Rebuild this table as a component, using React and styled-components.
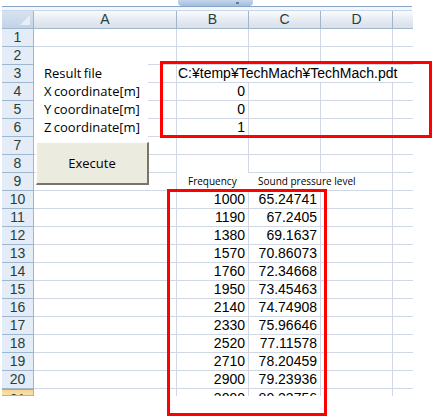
import React from "react";
import styled, { createGlobalStyle } from "styled-components";

const GlobalStyle = createGlobalStyle`
    body {
        margin: 0;
        background: #fff;
    }
`;

const columns = ["A", "B", "C", "D", ""];

const labels = ["Result file", "X coordinate[m]", "Y coordinate[m]", "Z coordinate[m]"];

const results = [
    ["1000", "65.24741"],
    ["1190", "67.2405"],
    ["1380", "69.1637"],
    ["1570", "70.86073"],
    ["1760", "72.34668"],
    ["1950", "73.45463"],
    ["2140", "74.74908"],
    ["2330", "75.96646"],
    ["2520", "77.11578"],
    ["2710", "78.20459"],
    ["2900", "79.23936"],
    ["3090", "80.23756"],
];

// what goes in each row (1..21), columns A..E
function rowCells(row) {
    const empty = [{}, {}, {}, {}, {}];
    if (row === 3) {
        return [{}, { text: "C:¥temp¥TechMach¥TechMach.pdt", overflow: true, noRight: true }, { noRight: true }, { noRight: true }, {}];
    }
    if (row >= 4 && row <= 6) {
        return [{}, { text: row === 6 ? "1" : "0", right: true }, {}, {}, {}];
    }
    if (row === 8) {
        return [{}, { noBottom: true }, {}, {}, {}];
    }
    if (row === 9) {
        return [{}, { text: "Frequency", small: true, pad: 11, noRight: true }, { text: "Sound pressure level", small: true, pad: 9, noRight: true }, {}, {}];
    }
    if (row >= 10) {
        const [f, spl] = results[row - 10];
        return [{}, { text: f, right: true }, { text: spl, right: true }, {}, {}];
    }
    return empty;
}

function App() {
    const rows = Array.from({ length: 21 }, (_, i) => i + 1);

    return (
        <Page>
            <GlobalStyle />
            <TopStrip>
                <ScrollTab />
            </TopStrip>
            <Sheet>
                <Corner />
                {columns.map((c, i) => (
                    <ColHead key={c + i} $last={i === columns.length - 1}>{c}</ColHead>
                ))}
                {rows.map((row) => (
                    <React.Fragment key={row}>
                        <RowHead $selected={row === 21} $partial={row === 21}>{row}</RowHead>
                        {rowCells(row).map((cell, ci) => (
                            <Cell
                                key={ci}
                                $right={cell.right}
                                $small={cell.small}
                                $pad={cell.pad}
                                $overflow={cell.overflow || cell.small}
                                $noRight={cell.noRight || ci === 4}
                                $noBottom={cell.noBottom || row === 21}
                                $partial={row === 21}
                            >
                                {cell.text}
                            </Cell>
                        ))}
                    </React.Fragment>
                ))}
            </Sheet>

            <LabelBox>
                {labels.map((l) => (
                    <Label key={l}>{l}</Label>
                ))}
            </LabelBox>

            <ExecuteButton>Execute</ExecuteButton>

            <Highlight style={{ left: 160, top: 61, width: 272, height: 77 }} />
            <Highlight style={{ left: 167, top: 189, width: 160, height: 227 }} />
        </Page>
    );
}

const Page = styled.div`
    position: relative;
    width: 434px;
    height: 419px;
    overflow: hidden;
    background: #fff;
    font-family: "Liberation Sans", Arial, sans-serif;
`;

const TopStrip = styled.div`
    display: flex;
    height: 11px;
    margin-left: 2px;
    width: 410px;
    background: linear-gradient(to bottom, #fff 0 6px, #87a5c8 6px 7px, #f3f6fa 7px 10px, #c9d6e6 10px);
`;

const ScrollTab = styled.div`
    margin-left: 176px;
    width: 75px;
    height: 6px;
    border-radius: 0 0 4px 4px;
    background: linear-gradient(to bottom, #c5d6ec, #a3bcdc);
    position: relative;

    &::after {
        content: "";
        position: absolute;
        right: 14px;
        top: 2px;
        width: 3px;
        height: 2px;
        background: #6b7d94;
    }
`;

const Sheet = styled.div`
    display: grid;
    grid-template-columns: 32px 143px 72px 72px 72px 20px;
    grid-template-rows: repeat(21, 18px) 7px;
    margin-left: 2px;
    width: 411px;
    overflow: hidden;
`;

const Corner = styled.div`
    position: relative;
    background: linear-gradient(to bottom, #d6e2f0, #c2d3e8);
    border-right: 1px solid #9eb6ce;
    border-bottom: 1px solid #9eb6ce;

    &::after {
        content: "";
        position: absolute;
        right: 3px;
        bottom: 3px;
        border-left: 10px solid transparent;
        border-bottom: 10px solid #e9eef5;
    }
`;

const ColHead = styled.div`
    display: flex;
    align-items: center;
    justify-content: center;
    background: linear-gradient(to bottom, #f9fbfd, #e4e9f0 60%, #d9e0ea);
    border-right: ${(p) => (p.$last ? "none" : "1px solid #9eb6ce")};
    border-bottom: 1px solid #9eb6ce;
    color: #27403c;
    font-size: 14px;
    line-height: 17px;
`;

const RowHead = styled.div`
    display: flex;
    align-items: ${(p) => (p.$partial ? "flex-start" : "center")};
    justify-content: center;
    overflow: hidden;
    background: ${(p) => (p.$selected ? "linear-gradient(to bottom, #f8d58f, #f9e0a9)" : "#e4ecf7")};
    border-top: ${(p) => (p.$selected ? "1px solid #f29536" : "none")};
    border-right: 1px solid #9eb6ce;
    border-bottom: 1px solid #9eb6ce;
    color: #27403c;
    font-size: 14px;
    line-height: 17px;
    padding-top: ${(p) => (p.$partial ? "1px" : "0")};
`;

const Cell = styled.div`
    box-sizing: border-box;
    border-right: ${(p) => (p.$noRight ? "none" : "1px solid #d0d7e5")};
    border-bottom: ${(p) => (p.$noBottom ? "none" : "1px solid #d0d7e5")};
    padding: ${(p) => (p.$right ? "0 3px 0 0" : `0 0 0 ${p.$pad || 1}px`)};
    padding-top: ${(p) => (p.$partial ? "1px" : "0")};
    text-align: ${(p) => (p.$right ? "right" : "left")};
    white-space: nowrap;
    overflow: ${(p) => (p.$overflow ? "visible" : "hidden")};
    color: #000;
    font-family: ${(p) => (p.$small ? `"Open Sans", sans-serif` : `"Liberation Sans", Arial, sans-serif`)};
    font-size: ${(p) => (p.$small ? "10px" : "14px")};
    line-height: 17px;
    position: relative;
    z-index: ${(p) => (p.$overflow ? 1 : 0)};
`;

const LabelBox = styled.div`
    position: absolute;
    left: 34px;
    top: 64px;
    width: 114px;
    height: 73px;
    background: #fff;
    display: flex;
    flex-direction: column;
`;

const Label = styled.div`
    height: 18px;
    line-height: 18px;
    padding-left: 10px;
    font-family: "Open Sans", sans-serif;
    font-size: 13px;
    word-spacing: -1px;
    color: #000;
    white-space: nowrap;
`;

const ExecuteButton = styled.button`
    position: absolute;
    left: 36px;
    top: 142px;
    width: 113px;
    height: 43px;
    box-sizing: border-box;
    background: #ecebdf;
    border-top: 1px solid #fdfdfb;
    border-left: 1px solid #fdfdfb;
    border-right: 2px solid #77766c;
    border-bottom: 2px solid #77766c;
    font-family: "Open Sans", sans-serif;
    font-size: 13px;
    color: #000;
    padding: 0;
`;

const Highlight = styled.div`
    position: absolute;
    box-sizing: border-box;
    border: 3px solid #ff0000;
    pointer-events: none;
    z-index: 2;
`;

export default App;
